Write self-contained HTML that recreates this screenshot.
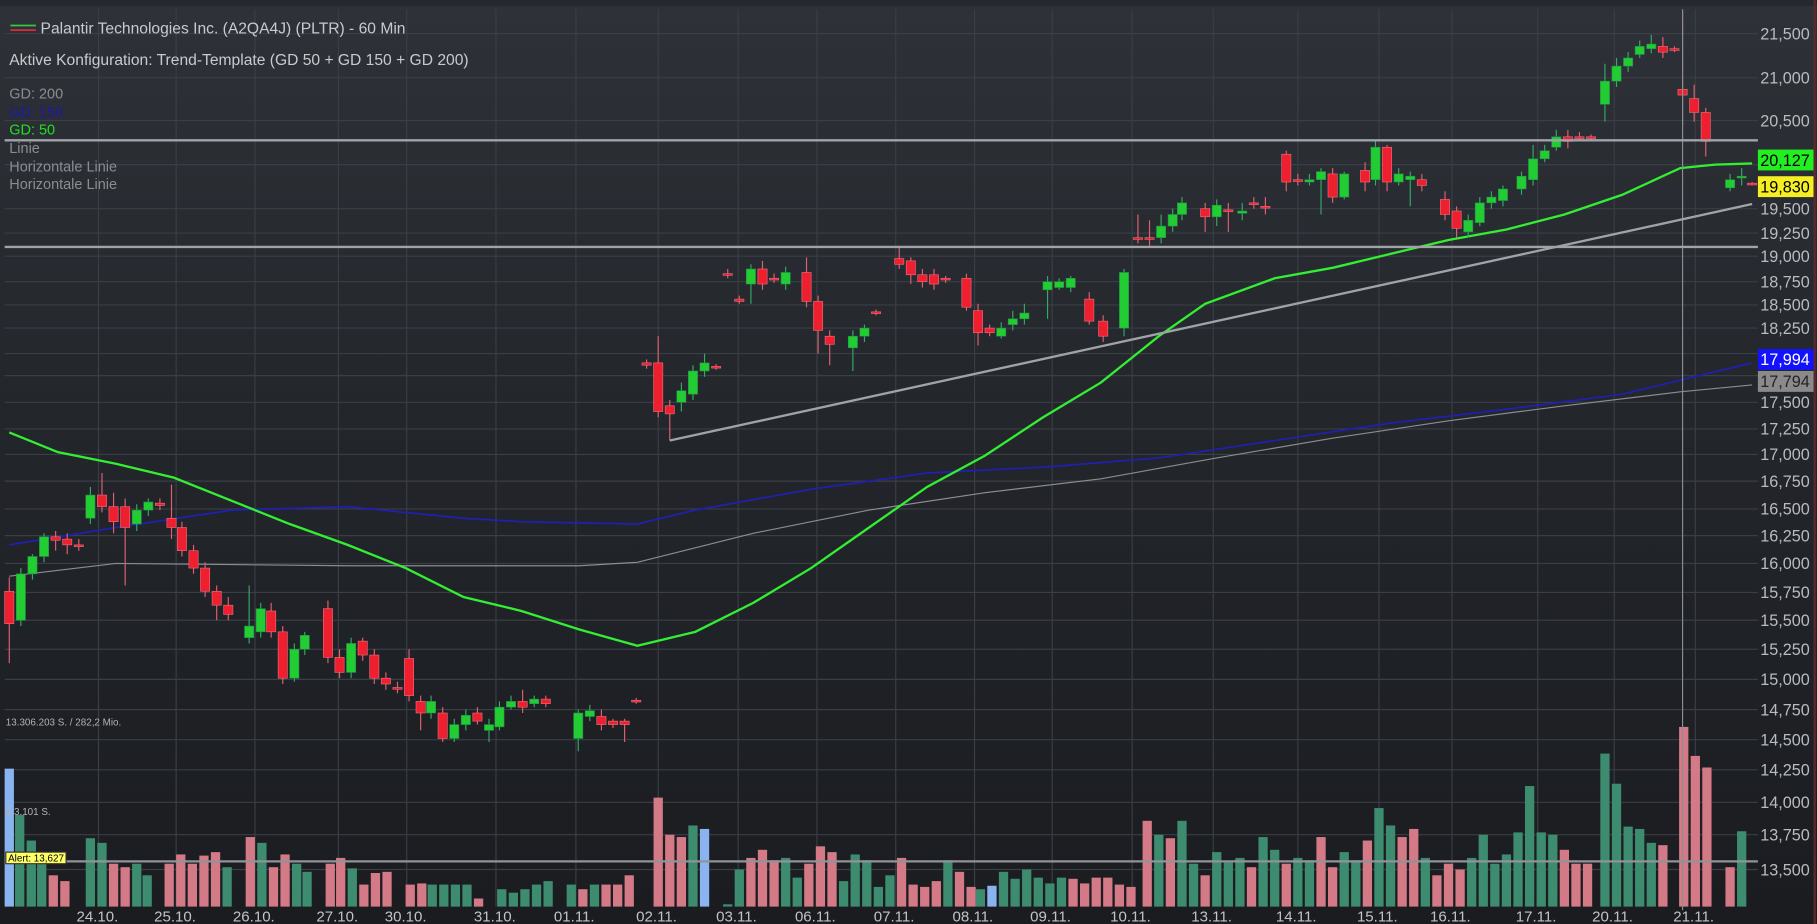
<!DOCTYPE html>
<html><head><meta charset="utf-8"><style>
html,body{margin:0;padding:0;background:#1c1e22;width:1817px;height:924px;overflow:hidden}
svg{display:block}
text{font-family:"Liberation Sans",sans-serif}
</style></head><body>
<svg id="s" width="1817" height="924" viewBox="0 0 1568 797" preserveAspectRatio="none" xmlns="http://www.w3.org/2000/svg">
<defs><linearGradient id="bg" x1="0" y1="0" x2="0" y2="1"><stop offset="0" stop-color="#2e3238"/><stop offset="0.45" stop-color="#23262b"/><stop offset="1" stop-color="#1a1c20"/></linearGradient></defs>
<rect width="1568" height="797" fill="url(#bg)"/>
<rect x="0" y="0" width="1568" height="5" fill="#25282d"/>
<g id="grid" stroke="#3a3e45" stroke-width="1"></g>
<g id="ma" fill="none"></g>
<g id="vol"></g>
<g id="cand"></g>
<line x1="1452" y1="8" x2="1452" y2="785" stroke="#8a8d92" stroke-width="1"/>
<line x1="4" y1="121" x2="1517" y2="121" stroke="#a0a3a8" stroke-width="2"/>
<line x1="4" y1="213" x2="1517" y2="213" stroke="#a0a3a8" stroke-width="2"/>
<line x1="578" y1="380" x2="1512" y2="176" stroke="#a0a3a8" stroke-width="2"/>
<line x1="4" y1="743" x2="1517" y2="743" stroke="#909398" stroke-width="2"/>
<g id="txt" font-size="13.5">
<line x1="9" y1="22" x2="31" y2="22" stroke="#2ecc40" stroke-width="1.5"/>
<line x1="9" y1="26" x2="31" y2="26" stroke="#e0283c" stroke-width="1.5"/>
<text x="35" y="29" fill="#c8cacd">Palantir Technologies Inc. (A2QA4J) (PLTR) - 60 Min</text>
<text x="8" y="56" fill="#c8cacd">Aktive Konfiguration: Trend-Template (GD 50 + GD 150 + GD 200)</text>
<text x="8" y="85" fill="#8a8d92" font-size="12.5">GD: 200</text>
<text x="8" y="101" fill="#1a1aa8" font-size="12.5">GD: 150</text>
<text x="8" y="116" fill="#22dd22" font-size="12.5">GD: 50</text>
<text x="8" y="132" fill="#8a8d92" font-size="12.5">Linie</text>
<text x="8" y="148" fill="#8a8d92" font-size="12.5">Horizontale Linie</text>
<text x="8" y="163" fill="#8a8d92" font-size="12.5">Horizontale Linie</text>
<text x="5" y="626" fill="#b0b3b8" font-size="8.5">13.306.203 S. / 282,2 Mio.</text>
<text x="5" y="703" fill="#b0b3b8" font-size="8.5">6.3.101 S.</text>
<rect x="5" y="735" width="52" height="10" fill="#ffff66" stroke="#333"/>
<text x="7" y="743" fill="#000" font-size="8.5">Alert: 13,627</text>
</g>
<g id="axis" font-size="14" fill="#b8bbbf"></g>
<g id="dates" font-size="13" fill="#c0c3c7"></g>
<rect x="1517" y="129" width="48" height="18" fill="#22ee22"/><text x="1519" y="143" font-size="14" fill="#000">20,127</text>
<rect x="1517" y="152" width="48" height="18" fill="#f4ee22"/><text x="1519" y="166" font-size="14" fill="#000">19,830</text>
<rect x="1517" y="301" width="48" height="18" fill="#1212ff"/><text x="1519" y="315" font-size="14" fill="#fff">17,994</text>
<rect x="1517" y="320" width="48" height="18" fill="#8a8a8a"/><text x="1519" y="334" font-size="14" fill="#222">17,794</text>
<line x1="1566" y1="0" x2="1566" y2="797" stroke="#5a2a2a" stroke-width="2"/>
</svg>
<script>
var NS="http://www.w3.org/2000/svg";
function el(p,t,a,tx){var e=document.createElementNS(NS,t);for(var k in a)e.setAttribute(k,a[k]);if(tx)e.textContent=tx;document.getElementById(p).appendChild(e);return e;}
var ax=[[21500,34],[21000,72],[20500,109],[20000,147],[19500,185],[19250,206],[19000,226],[18750,248],[18500,268],[18250,288],[17500,352],[17250,375],[17000,397],[16750,420],[16500,444],[16250,467],[16000,491],[15750,516],[15500,540],[15250,565],[15000,591],[14750,617],[14500,643],[14250,669],[14000,697],[13750,725],[13500,755]];
ax.forEach(function(a){el("grid","line",{x1:4,y1:a[1]-5,x2:1517,y2:a[1]-5});if(a[0]!=20000)el("axis","text",{x:1519,y:a[1]},(a[0]+"").replace(/(\d\d)(\d\d\d)/,"$1,$2"));});
[[17994,305],[17794,324]].forEach(function(a){el("grid","line",{x1:4,y1:a[1],x2:1517,y2:a[1]});});
var d=[["24.10.",85],["25.10.",137],["26.10.",191],["27.10.",243],["30.10.",297],["31.10.",351],["01.11.",497],["02.11.",568],["03.11.",632],["06.11.",686],["07.11.",743],["08.11.",841],["09.11.",908],["10.11.",977],["13.11.",1047],["14.11.",1120],["15.11.",1190],["16.11.",1253],["17.11.",1327],["20.11.",1393],["21.11.",1463]];
d=[["24.10.",85],["25.10.",152],["26.10.",220],["27.10.",292],["30.10.",351],["31.10.",428],["01.11.",497],["02.11.",568],["03.11.",637],["06.11.",705],["07.11.",773],["08.11.",841],["09.11.",908],["10.11.",977],["13.11.",1047],["14.11.",1120],["15.11.",1190],["16.11.",1253],["17.11.",1327],["20.11.",1393],["21.11.",1463]];
d.forEach(function(a){el("grid","line",{x1:a[1],y1:8,x2:a[1],y2:782});el("dates","text",{x:a[1]-19,y:795},a[0]);});
function pl(pts,c,w){el("ma","polyline",{points:pts.map(function(p){return p.join(",")}).join(" "),stroke:c,"stroke-width":w});}
pl([[8,497],[100,486],[200,487],[300,488],[400,488],[500,488],[550,485],[650,460],[750,440],[850,425],[950,413],[1050,395],[1150,378],[1250,363],[1350,350],[1450,338],[1512,332]],"#8a8d92",1);
pl([[8,470],[100,455],[200,440],[300,437],[400,447],[450,450],[550,452],[600,440],[700,422],[800,408],[900,403],[1000,395],[1100,380],[1200,365],[1300,353],[1400,340],[1512,313]],"#2020b0",1.5);
pl([[8,373],[50,390],[100,400],[150,412],[200,432],[250,452],[300,470],[350,490],[400,515],[450,527],[500,543],[550,557],[600,545],[650,520],[700,490],[750,455],[800,420],[850,393],[900,360],[950,330],[1000,290],[1040,262],[1100,240],[1150,231],[1200,219],[1250,207],[1300,198],[1350,185],[1400,168],[1450,145],[1480,142],[1512,141]],"#33ee33",2);
// candles x,open,close (pixel y)
var c=[[8,510,538,498,572],[18,535,495,490,540],[28,495,480,478,500],[38,480,463,460,485],[48,463,466,458,475],[58,465,470,460,478],[68,470,470,465,475],[78,447,427,420,452],[88,427,437,408,442],[98,437,450,425,460],[108,437,455,430,505],[118,452,440,435,458],[128,440,433,430,445],[138,434,436,430,440],[148,447,455,418,465],[157,455,475,450,480],[167,475,490,470,495],[177,490,510,485,515],[187,510,522,505,535],[197,522,530,515,535],[215,550,540,505,555],[225,545,525,520,550],[234,527,545,520,550],[244,545,585,540,590],[254,585,560,555,588],[263,560,548,545,565],[283,525,567,518,572],[293,567,580,560,585],[303,580,555,550,585],[313,553,565,550,570],[323,565,585,560,590],[333,585,590,580,595],[343,593,594,588,598],[353,568,600,560,605],[363,605,615,600,630],[372,615,605,600,620],[382,615,637,610,640],[392,637,625,620,640],[402,625,617,612,630],[412,615,622,610,625],[422,630,625,620,640],[431,627,610,605,630],[441,610,605,600,612],[451,605,610,595,615],[461,607,603,600,610],[471,603,607,600,610],[499,637,615,612,648],[509,618,613,608,622],[519,618,625,612,630],[529,622,625,620,628],[539,622,625,620,640],[549,604,605,602,607],
[558,313,315,310,318],[568,313,355,290,360],[578,350,357,345,380],[588,347,337,330,355],[598,340,320,315,345],[608,320,313,305,325],[618,316,317,314,319],[628,236,237,232,240],[638,258,260,255,262],[648,245,232,228,262],[658,232,245,225,250],[668,240,241,236,244],[678,245,235,230,250],[696,235,260,222,265],[706,260,285,255,305],[716,290,297,285,315],[736,300,290,285,320],[746,290,283,280,295],[756,269,270,267,272],[776,223,228,212,232],[786,225,237,222,245],[796,237,243,232,248],[806,237,245,232,250],[816,240,241,238,244],[834,240,265,236,268],[844,268,287,262,298],[854,283,287,280,290],[864,290,283,278,292],[874,280,275,268,285],[884,275,270,262,280],[904,250,243,238,275],[914,248,243,240,250],[924,248,240,238,252],[940,258,277,252,280],[952,277,290,272,295],[970,283,235,232,290],[982,205,206,185,210],[992,205,206,190,212],[1002,205,195,185,210],[1012,195,185,180,200],[1020,185,175,170,190],[1040,180,187,175,200],[1050,187,177,172,195],[1060,181,182,175,200],[1072,184,182,175,190],[1082,175,176,170,180],[1092,178,179,170,185],[1110,133,157,130,165],[1120,155,156,150,160],[1130,157,155,150,160],[1140,155,148,145,185],[1150,150,170,145,175],[1160,170,150,148,172],[1178,147,157,140,165],[1187,155,127,122,160],[1197,127,157,125,165],[1207,157,150,145,160],[1217,155,152,148,178],[1227,155,160,150,165],[1247,172,185,165,190],[1257,182,197,178,205],[1267,200,190,185,205],[1277,192,175,170,195],[1287,175,170,165,180],[1297,173,163,160,178],[1313,163,152,148,168],[1323,155,137,125,160],[1333,137,130,125,140],[1343,127,118,112,130],[1353,118,122,112,128],[1363,118,119,114,122],[1373,118,119,116,121],[1385,90,70,55,105],[1395,70,57,50,75],[1405,57,50,45,62],[1415,47,40,35,50],[1425,42,38,30,46],[1435,40,45,32,50],[1445,42,43,40,45],[1452,77,82,10,108],[1462,85,97,73,105],[1472,97,122,93,135],[1493,162,155,150,165],[1503,153,152,145,160],[1512,158,159,157,160]];
c.forEach(function(a){var x=a[0],up=a[2]<a[1],col=up?"#22cc33":"#ee2030",wc=up?"#33aa66":"#e06070";
el("cand","line",{x1:x,y1:a[3],x2:x,y2:a[4],stroke:wc,"stroke-width":1});
var t=Math.min(a[1],a[2]),h=Math.max(1.5,Math.abs(a[1]-a[2]));
el("cand","rect",{x:x-4,y:t,width:8,height:h,fill:col,stroke:up?"#2a8a4a":"#f07080","stroke-width":0.5});});
var v=[[8,663,"b"],[17,703,"g"],[27,725,"g"],[36,735,"g"],[46,755,"p"],[56,760,"p"],[78,723,"g"],[88,727,"g"],[98,745,"p"],[108,748,"p"],[118,745,"g"],[127,755,"g"],[146,745,"p"],[156,737,"p"],[166,745,"p"],[176,738,"p"],[186,735,"p"],[196,748,"g"],[216,722,"p"],[226,727,"g"],[236,748,"p"],[246,737,"p"],[256,745,"g"],[265,752,"g"],[285,745,"p"],[294,740,"p"],[304,749,"g"],[314,763,"p"],[324,753,"p"],[334,752,"p"],[354,763,"p"],[364,762,"p"],[373,763,"g"],[383,763,"g"],[393,763,"g"],[403,763,"g"],[413,775,"p"],[433,767,"g"],[443,770,"g"],[453,767,"g"],[463,763,"g"],[473,760,"g"],[493,763,"g"],[503,767,"p"],[513,763,"g"],[523,763,"p"],[533,763,"p"],[543,755,"p"],[568,688,"p"],[578,720,"p"],[588,722,"p"],[598,712,"g"],[608,715,"b"],[628,780,"g"],[638,750,"g"],[648,740,"p"],[658,733,"p"],[668,742,"p"],[678,740,"g"],[688,757,"g"],[698,745,"p"],[708,730,"p"],[718,735,"p"],[728,760,"g"],[738,737,"g"],[748,742,"g"],[758,765,"g"],[768,755,"g"],[778,740,"p"],[788,763,"p"],[798,765,"p"],[808,760,"p"],[818,742,"g"],[828,752,"p"],[838,765,"p"],[846,767,"g"],[856,764,"b"],[866,752,"g"],[876,758,"g"],[886,750,"g"],[896,757,"g"],[906,762,"g"],[916,757,"g"],[926,758,"p"],[936,762,"p"],[946,757,"p"],[956,757,"p"],[966,763,"p"],[976,765,"p"],[990,708,"p"],[1000,720,"g"],[1010,723,"p"],[1020,708,"g"],[1030,745,"g"],[1040,755,"p"],[1050,735,"g"],[1060,744,"g"],[1070,740,"g"],[1080,748,"p"],[1090,722,"g"],[1100,733,"g"],[1110,745,"p"],[1120,740,"g"],[1130,742,"g"],[1140,722,"p"],[1150,748,"p"],[1160,735,"g"],[1170,742,"g"],[1180,725,"p"],[1190,697,"g"],[1200,712,"g"],[1210,722,"p"],[1220,715,"p"],[1230,740,"g"],[1240,755,"p"],[1250,745,"p"],[1260,750,"p"],[1270,740,"g"],[1280,720,"g"],[1290,745,"g"],[1300,737,"g"],[1310,718,"g"],[1320,678,"g"],[1330,718,"g"],[1340,720,"g"],[1350,733,"p"],[1360,745,"p"],[1370,745,"p"],[1385,650,"g"],[1395,676,"g"],[1405,713,"g"],[1415,715,"g"],[1425,727,"g"],[1435,729,"p"],[1453,627,"p"],[1463,652,"p"],[1473,662,"p"],[1493,748,"p"],[1503,717,"g"]];
var vc={g:"#3e8c70",p:"#d47a86",b:"#8ab4f0"};
v.forEach(function(a){el("vol","rect",{x:a[0]-4,y:a[1],width:8,height:782-a[1],fill:vc[a[2]]});});
</script>
</body></html>
